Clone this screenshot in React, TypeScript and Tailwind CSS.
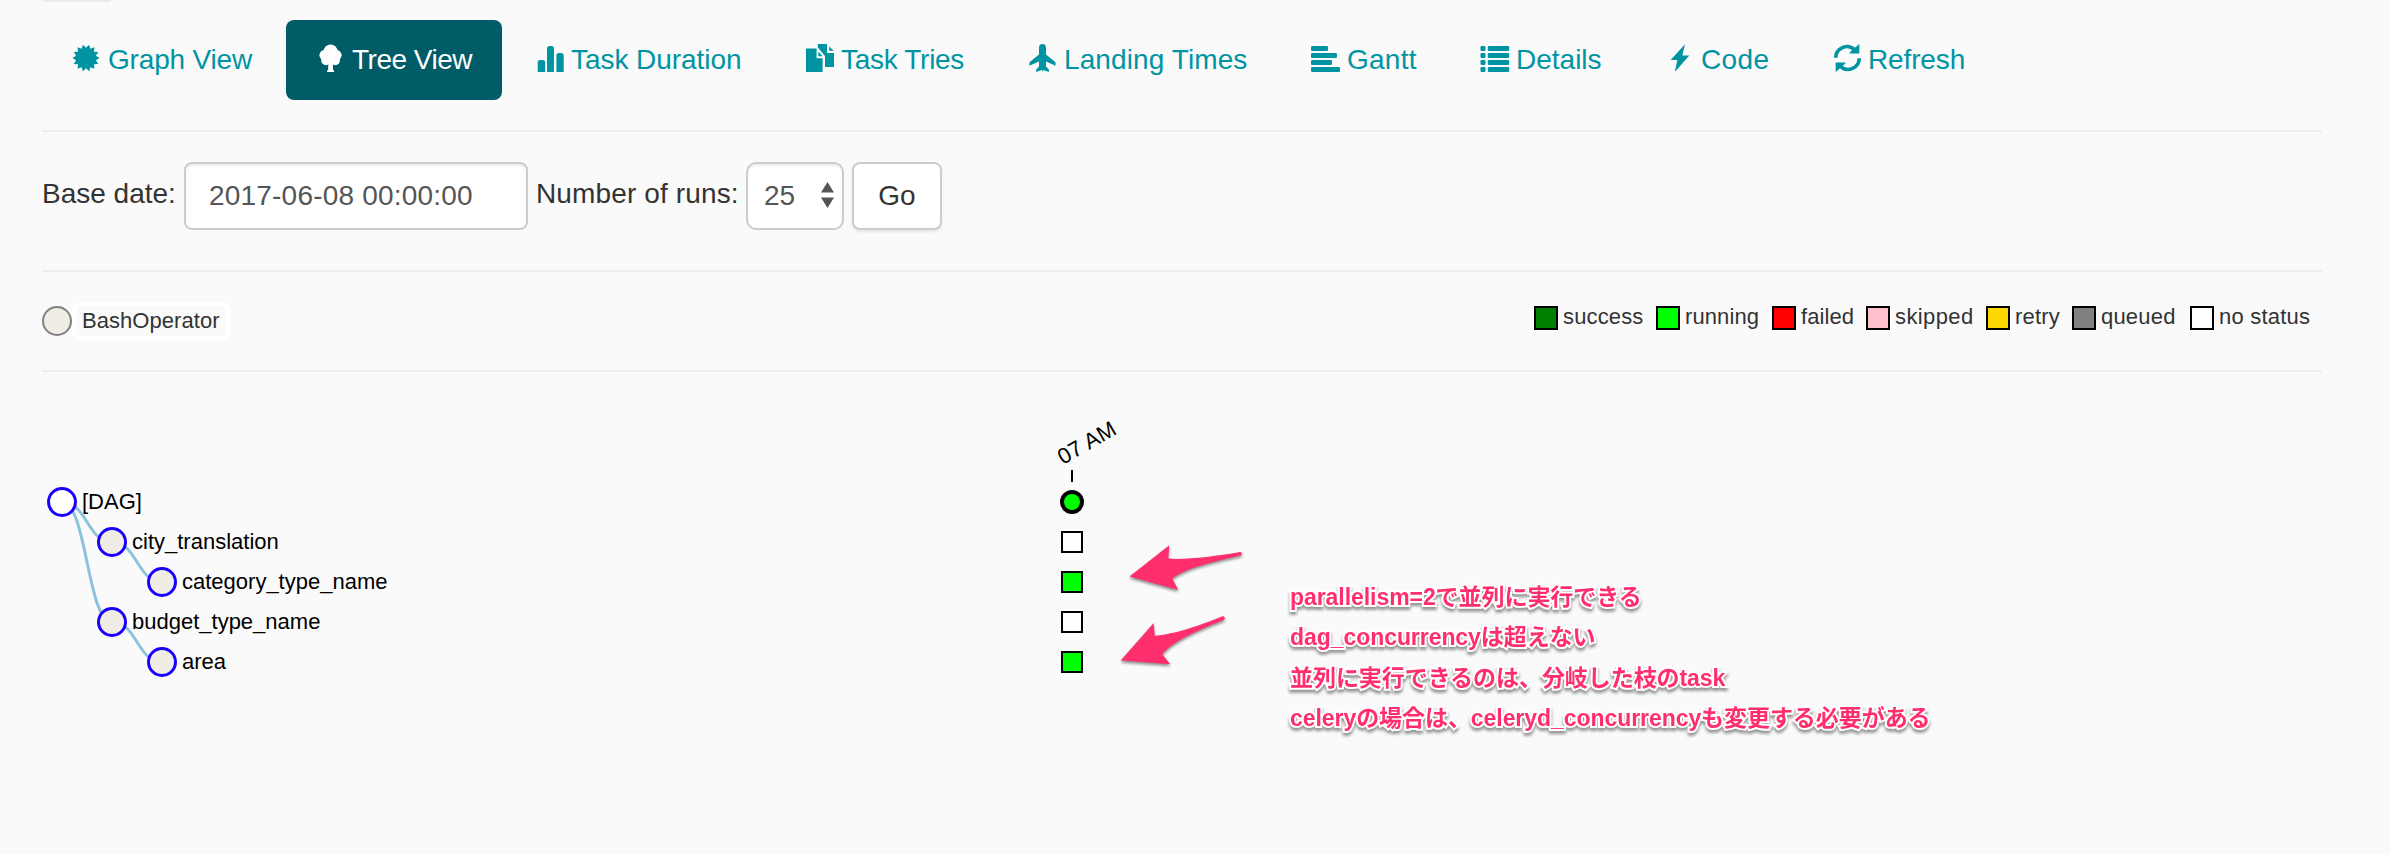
import type { ReactNode } from "react";

const burst = Array.from({ length: 28 }, (_, i) => {
  const angle = (i * Math.PI) / 14;
  const r = i % 2 === 0 ? 13.6 : 10.2;
  return `${(14 + r * Math.cos(angle)).toFixed(2)},${(14 + r * Math.sin(angle)).toFixed(2)}`;
}).join(" ");

function Icon({ children }: { children: ReactNode }) {
  return (
    <svg viewBox="0 0 28 28" fill="currentColor" className="mb-1 size-7 shrink-0 overflow-visible">
      {children}
    </svg>
  );
}

const refreshHalf = (
  <>
    <path d="M2.7 13.8A11.3 11.3 0 0 1 21.6 5.6" fill="none" stroke="currentColor" strokeWidth="3.6" />
    <path d="M26.3 0V9.5H16.6V8.6Z" />
  </>
);

const tabs = [
  {
    label: "Graph View",
    box: "w-[240px] gap-2",
    track: "tracking-[-0.18px]",
    icon: <polygon points={burst} />,
  },
  {
    label: "Tree View",
    box: "w-[216px] gap-2 rounded-lg bg-[#005c66] text-white",
    track: "tracking-[-0.5px]",
    icon: (
      <>
        <circle cx="14.6" cy="7.4" r="7" />
        <circle cx="8.8" cy="11.2" r="5.4" />
        <circle cx="20.2" cy="11.2" r="5.4" />
        <circle cx="10" cy="16.4" r="4.8" />
        <circle cx="19.2" cy="16.4" r="4.8" />
        <path d="M12.6 14h4l.5 12.3h1v1.7h-7v-1.7h1Z" />
      </>
    ),
  },
  {
    label: "Task Duration",
    box: "w-[266px] gap-[7px]",
    track: "tracking-[-0.06px]",
    icon: (
      <>
        <path d="M1.7 28V18.5q0-2.5 2.5-2.5h2.5q2.5 0 2.5 2.5V28Z" />
        <path d="M11 28V4.5Q11 2 13.5 2h2Q18 2 18 4.5V28Z" />
        <path d="M20.4 28V11.5q0-2.5 2.5-2.5h2.3q2.5 0 2.5 2.5V28Z" />
      </>
    ),
  },
  {
    label: "Task Tries",
    box: "w-[217px] gap-[7px]",
    track: "tracking-[-0.3px]",
    icon: (
      <>
        <path d="M0 4.6H10.6V14.2H16.6V28H0Z" />
        <path d="M12.4 7.6L16.4 12.2H12.4Z" />
        <path d="M11.8 0H21V9H28V23H19V12L11.8 3.6Z" />
        <path d="M23.2 2.4L27.8 6.8H23.2Z" />
      </>
    ),
  },
  {
    label: "Landing Times",
    box: "ml-px w-[279px] gap-2",
    track: "tracking-[0.1px]",
    icon: (
      <path d="M14.500 0c2.400 0 3.500 1.600 3.500 4v6.600L27.500 18.200v3.600L18 17.400v5.200L20.900 25.600V28L15.300 26 14.500 27.600 13.700 26 8.100 28V25.600L11 22.600V17.400L1.500 21.800V18.200L11 10.600V4C11 1.600 12.100 0 14.500 0Z" />
    ),
  },
  {
    label: "Gantt",
    box: "w-[166px] gap-2",
    track: "tracking-[0.25px]",
    icon: (
      <>
        <rect x="0" y="2" width="17" height="5" rx="1.2" />
        <rect x="0" y="9" width="26" height="5" rx="1.2" />
        <rect x="0" y="16" width="21" height="5" rx="1.2" />
        <rect x="0" y="23" width="29" height="5" rx="1.2" />
      </>
    ),
  },
  {
    label: "Details",
    box: "w-[180px] gap-[7px]",
    track: "tracking-normal",
    icon: (
      <>
        {[2, 9, 16, 23].map((y) => (
          <g key={y}>
            <rect x="-0.5" y={y} width="5" height="5" rx="1.2" />
            <rect x="6.8" y={y} width="21.4" height="5" rx="1.2" />
          </g>
        ))}
      </>
    ),
  },
  {
    label: "Code",
    box: "w-[164px] gap-2",
    track: "tracking-[0.4px]",
    icon: <path d="M20 .3L5.6 16H12.3L9.8 28L24.3 11.6H17.3Z" />,
  },
  {
    label: "Refresh",
    box: "w-[194px] gap-[7px]",
    track: "tracking-[-0.14px]",
    icon: (
      <>
        {refreshHalf}
        <g transform="rotate(180 14.5 14)">{refreshHalf}</g>
      </>
    ),
  },
];

const legend = [
  { label: "success", box: "w-[122px]", color: "bg-[#008000]", track: "tracking-[0.15px]" },
  { label: "running", box: "w-[116px]", color: "bg-[#00ff00]", track: "tracking-[0.1px]" },
  { label: "failed", box: "w-[94px]", color: "bg-[#ff0000]", track: "tracking-[0.1px]" },
  { label: "skipped", box: "w-[120px]", color: "bg-[#ffc0cb]", track: "tracking-[0.4px]" },
  { label: "retry", box: "w-[86px]", color: "bg-[#ffd700]", track: "tracking-[0.2px]" },
  { label: "queued", box: "w-[118px]", color: "bg-[#808080]", track: "tracking-[0.2px]" },
  { label: "no status", box: "w-[132px]", color: "bg-white", track: "tracking-[0.2px]" },
];

const nodes = [
  { label: "[DAG]", x: 62, y: 502, fill: "#ffffff" },
  { label: "city_translation", x: 112, y: 542, fill: "#f0ede4" },
  { label: "category_type_name", x: 162, y: 582, fill: "#f0ede4" },
  { label: "budget_type_name", x: 112, y: 622, fill: "#f0ede4" },
  { label: "area", x: 162, y: 662, fill: "#f0ede4" },
];

const links = [
  [0, 1],
  [1, 2],
  [0, 3],
  [3, 4],
];

const runs = [
  { y: 542, fill: "#ffffff" },
  { y: 582, fill: "#00ff00" },
  { y: 622, fill: "#ffffff" },
  { y: 662, fill: "#00ff00" },
];

const notes = [
  "parallelism=2で並列に実行できる",
  "dag_concurrencyは超えない",
  "並列に実行できるのは、分岐した枝のtask",
  "celeryの場合は、celeryd_concurrencyも変更する必要がある",
];

function linkPath(from: number, to: number) {
  const a = nodes[from];
  const b = nodes[to];
  const mid = (a.x + b.x) / 2;
  return `M${a.x} ${a.y}C${mid} ${a.y} ${mid} ${b.y} ${b.x} ${b.y}`;
}

function TreeChart() {
  return (
    <svg
      viewBox="0 372 1260 482"
      className="h-[482px] w-[1260px] shrink-0 font-['Liberation_Sans',Arial,sans-serif] text-[22px]"
    >
      <g fill="none" stroke="#8dc2df" strokeWidth="3">
        {links.map(([a, b]) => (
          <path key={`${a}-${b}`} d={linkPath(a, b)} />
        ))}
      </g>
      {nodes.map((n) => (
        <g key={n.label}>
          <circle cx={n.x} cy={n.y} r="13.5" fill={n.fill} stroke="#1a00ff" strokeWidth="3" />
          <text x={n.x + 20} y={n.y + 7}>
            {n.label}
          </text>
        </g>
      ))}
      <text transform="translate(1063 465) rotate(-30)" letterSpacing="0.25">
        07 AM
      </text>
      <path d="M1072 470V482" stroke="#000" strokeWidth="2" />
      <circle cx="1072" cy="502" r="10" fill="#00ff00" stroke="#000" strokeWidth="4" />
      {runs.map((r) => (
        <rect key={r.y} x="1062" y={r.y - 10} width="20" height="20" fill={r.fill} stroke="#000" strokeWidth="2" />
      ))}
      <g fill="#ff2f6d" className="drop-shadow-[0_2px_1.5px_rgba(0,0,0,0.45)]">
        <path d="M1129.5 576.5L1169.3 545.3L1168.3 558.6C1185 560 1215 556.5 1240 552C1242.5 552 1242.5 555 1240.5 555.5C1215 561 1186 568 1172.3 578.5L1178.3 590Z" />
        <path d="M1120.7 660.5L1153.7 623L1154.7 635.7C1172 635 1200 625.5 1222.5 616.3C1225 616 1225.5 619 1223.7 620C1198 630 1173 641 1162.3 654.3L1170.3 664.3Z" />
      </g>
    </svg>
  );
}

export default function App() {
  return (
    <div className="flex h-[854px] w-[2390px] flex-col overflow-hidden bg-[#fafafa] font-['Liberation_Sans',Arial,sans-serif] text-[28px] text-[#333]">
      <div className="ml-[43px] h-0.5 w-[68px] shrink-0 rounded-b bg-gradient-to-b from-[#e6e6e6] to-[#f2f2f2]" />

      <nav className="mt-[18px] ml-[42px] flex h-20 shrink-0 gap-1 leading-10 text-[#0094a3]">
        {tabs.map((t) => (
          <a key={t.label} href="#" className={`flex items-center pl-[30px] whitespace-nowrap ${t.box}`}>
            <Icon>{t.icon}</Icon>
            <span className={t.track}>{t.label}</span>
          </a>
        ))}
      </nav>

      <hr className="mt-[30px] mr-[68px] ml-[42px] h-0.5 shrink-0 border-0 bg-[#eee]" />

      <form className="mt-[30px] ml-[42px] flex h-[68px] shrink-0 items-center gap-2 whitespace-nowrap">
        <label className="w-[134px] pb-1">Base date:</label>
        <input
          defaultValue="2017-06-08 00:00:00"
          className="h-[68px] w-[344px] rounded-lg border-2 border-[#ccc] bg-white px-[23px] tracking-[0.2px] text-[#555] shadow-[inset_0_2px_2px_rgba(0,0,0,0.075)]"
        />
        <label className="w-[202px] pb-1 tracking-[0.13px]">Number of runs:</label>
        <div className="flex h-[68px] w-[98px] items-center justify-between rounded-[10px] border-2 border-[#ccc] bg-white pr-2 pl-4 text-[#555] shadow-[inset_0_2px_2px_rgba(0,0,0,0.075)]">
          <span>25</span>
          <svg viewBox="0 0 13 26" fill="currentColor" className="mb-0.5 h-[26px] w-[13px]">
            <path d="M6.5 0L13 10.5H0ZM6.5 26L13 15.5H0Z" />
          </svg>
        </div>
        <button
          type="button"
          className="h-[68px] w-[90px] rounded-lg border-2 border-[#ccc] bg-white shadow-[0_2px_3px_rgba(0,0,0,0.08)]"
        >
          Go
        </button>
      </form>

      <hr className="mt-10 mr-[68px] ml-[42px] h-0.5 shrink-0 border-0 bg-[#eee]" />

      <div className="mr-[68px] ml-[42px] flex h-[98px] shrink-0 justify-between text-[22px] whitespace-nowrap">
        <div className="mt-[30px] flex h-[38px] items-center">
          <span className="size-[30px] rounded-full border-2 border-[#808080] bg-[#f0ede4]" />
          <span className="flex h-[38px] w-[158px] items-center rounded-lg border-4 border-white pb-0.5 pl-1.5 tracking-[0.05px]">
            BashOperator
          </span>
        </div>
        <div className="mt-[34px] flex h-6">
          {legend.map((s) => (
            <div key={s.label} className={`flex h-6 items-center gap-[5px] ${s.box}`}>
              <span className={`size-6 shrink-0 border-2 border-black ${s.color}`} />
              <span className={`pb-[3px] leading-6 ${s.track}`}>{s.label}</span>
            </div>
          ))}
        </div>
      </div>

      <hr className="mr-[68px] ml-[42px] h-0.5 shrink-0 border-0 bg-[#eee]" />

      <main className="flex text-black">
        <TreeChart />
        <div className="mt-[205px] ml-[30px] font-['Liberation_Sans','Noto_Sans_CJK_JP',sans-serif] text-[23px] leading-[40.33px] font-bold tracking-[-0.06px] whitespace-nowrap text-[#ff2f6d] [paint-order:stroke_fill] [-webkit-text-stroke:4px_#fff] drop-shadow-[0_3px_1.5px_rgba(0,0,0,0.4)]">
          {notes.map((n) => (
            <p key={n}>{n}</p>
          ))}
        </div>
      </main>
    </div>
  );
}
